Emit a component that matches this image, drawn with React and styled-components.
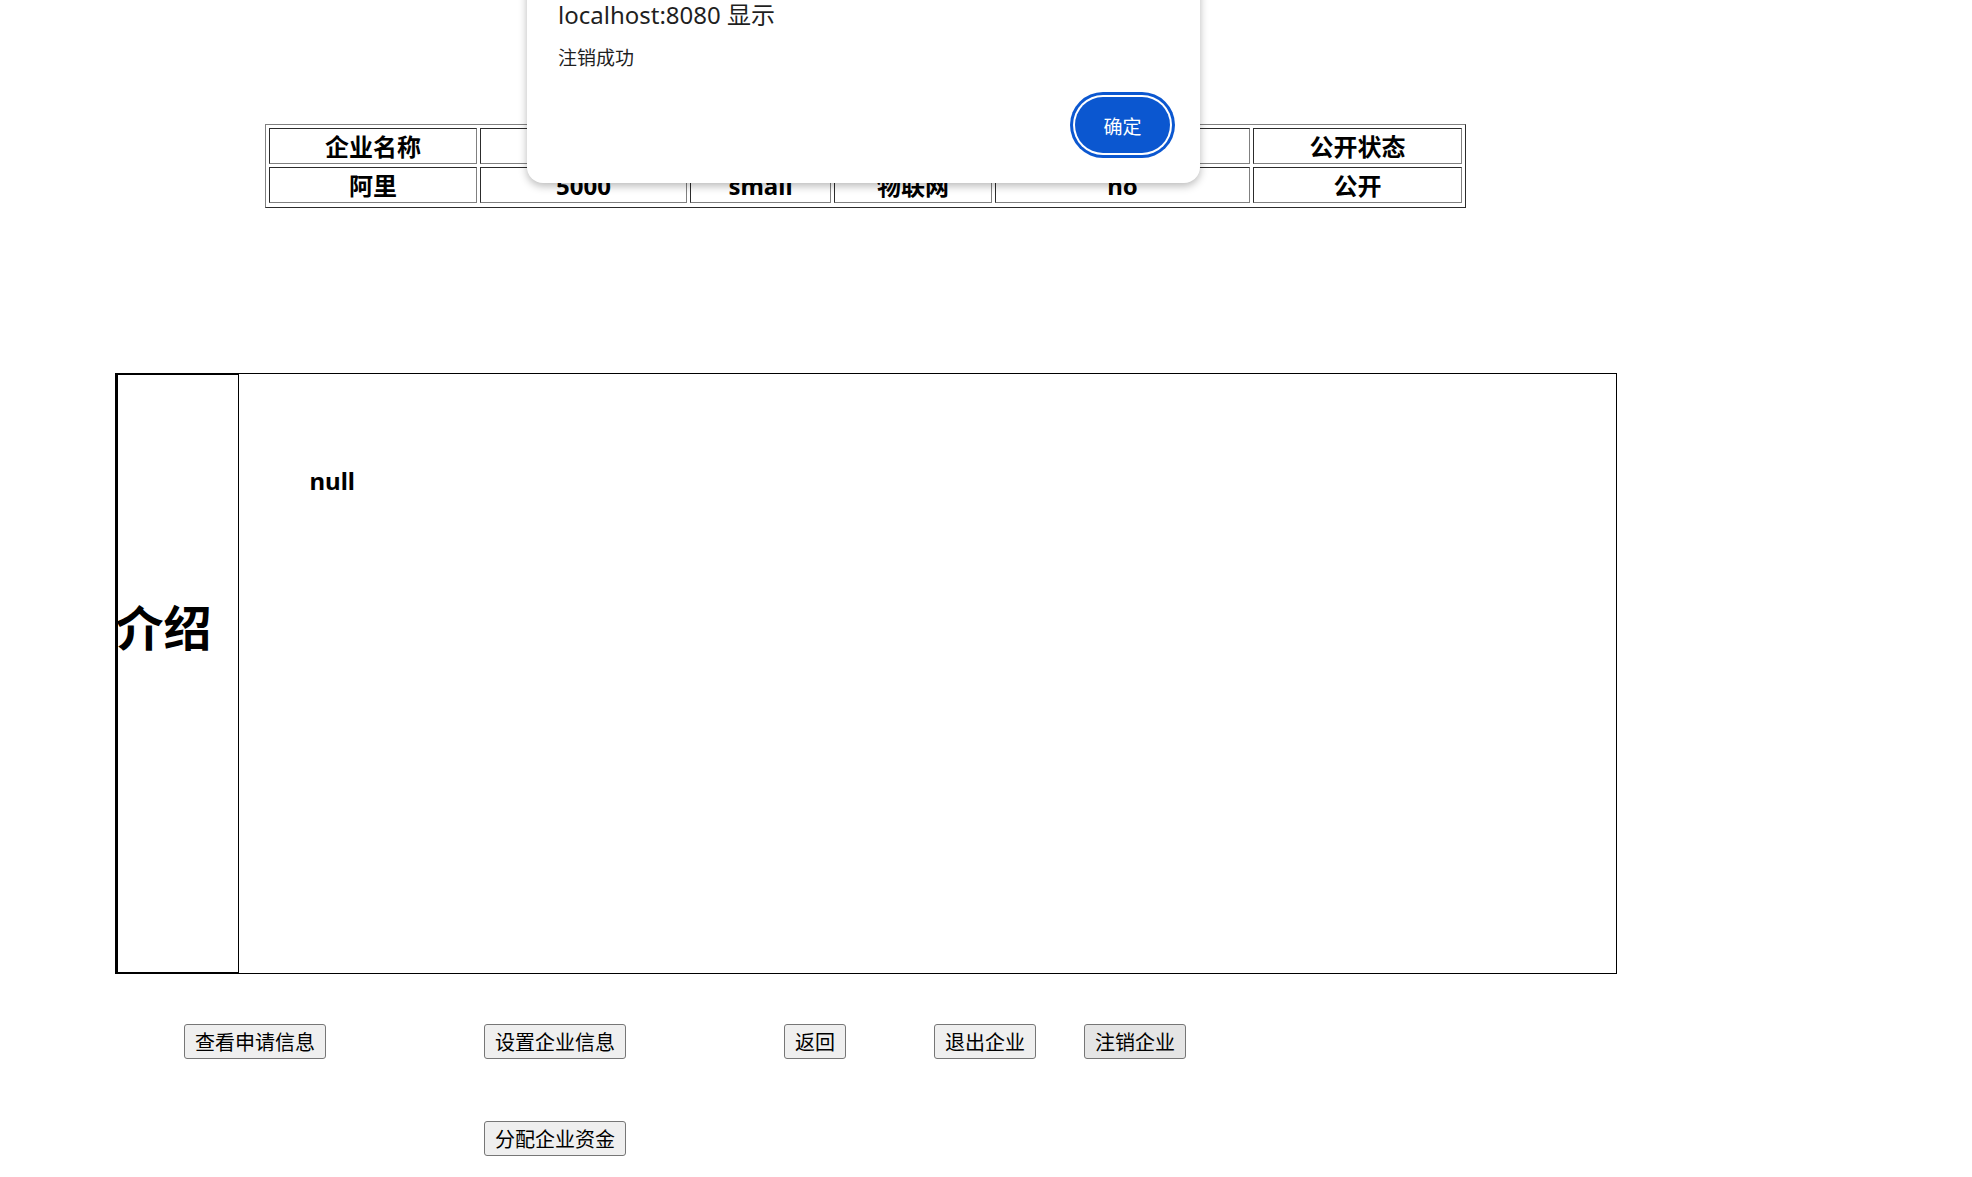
import React from "react";
import styled, { createGlobalStyle } from "styled-components";

const GlobalStyle = createGlobalStyle`
  html, body {
    margin: 0;
    padding: 0;
    background: #fff;
  }
  body {
    font-family: "Noto Sans", "Noto Sans CJK SC", sans-serif;
    color: #000;
  }
`;

const columns = [
  { title: "企业名称", value: "阿里", width: 208 },
  { title: "企业资金", value: "5000", width: 207 },
  { title: "规模", value: "small", width: 141 },
  { title: "行业", value: "物联网", width: 158 },
  { title: "是否需要审核", value: "no", width: 255 },
  { title: "公开状态", value: "公开", width: 209 },
];

const Page = styled.div`
  position: relative;
  width: 1731px;
  padding-top: 124px;
  padding-bottom: 21px;
`;

const InfoTable = styled.table`
  margin: 0 auto;
  border: 1px outset grey;
  border-spacing: 3px;
  padding-bottom: 1px;
`;

const Cell = styled.td`
  box-sizing: border-box;
  width: ${(p) => p.$w}px;
  height: 36px;
  padding: 1px 0 0;
  border: 1px inset grey;
  text-align: center;
  font-size: 24px;
  font-weight: 700;
  line-height: 33px;
`;

const IntroBox = styled.div`
  display: flex;
  width: 1502px;
  height: 601px;
  margin: 165px auto 0;
`;

const IntroLabel = styled.div`
  box-sizing: border-box;
  width: 123px;
  border-top: 2px solid #000;
  border-bottom: 2px solid #000;
  border-left: 3px solid #000;
  padding-top: 226px;
  font-family: "Noto Sans CJK SC", sans-serif;
  font-size: 48px;
  font-weight: 700;
  line-height: 1;
  text-indent: -2px;
`;

const IntroContent = styled.div`
  box-sizing: border-box;
  flex: 1;
  border: 1px solid #000;
  padding: 90px 0 0 71px;
  font-size: 24px;
  font-weight: 700;
`;

const ActionGrid = styled.div`
  display: grid;
  grid-template-columns: repeat(7, 150px);
  row-gap: 62px;
  margin: 50px 0 0 184px;
`;

const ActionButton = styled.button`
  grid-column: ${(p) => p.$col};
  justify-self: start;
  height: 35px;
  padding: 0 10px;
  border: 1px solid #767676;
  border-radius: 3px;
  background: ${(p) => (p.$hover ? "#e5e5e5" : "#efefef")};
  font-family: "Noto Sans CJK SC", sans-serif;
  font-size: 20px;
  color: #000;
  line-height: 1;
`;

const Dialog = styled.div`
  position: absolute;
  left: 527px;
  top: -40px;
  box-sizing: border-box;
  width: 673px;
  height: 223px;
  padding: 39px 20px 0 31px;
  background: #fff;
  border-radius: 16px;
  box-shadow: 0 3px 9px rgba(0, 0, 0, 0.28);
  display: flex;
  flex-direction: column;
`;

const DialogTitle = styled.div`
  font-family: "Noto Sans", "Noto Sans CJK SC", sans-serif;
  font-size: 24px;
  line-height: 32px;
  color: #1f1f1f;
`;

const DialogMessage = styled.div`
  margin-top: 13px;
  font-family: "Noto Sans CJK SC", sans-serif;
  font-size: 19px;
  line-height: 26px;
  color: #1f1f1f;
`;

const DialogFooter = styled.div`
  display: flex;
  justify-content: flex-end;
  margin-top: 27px;
  padding-right: 10px;
`;

const ConfirmButton = styled.button`
  width: 95px;
  height: 56px;
  border: none;
  border-radius: 28px;
  background: #0b57d0;
  box-shadow: 0 0 0 2px #fff, 0 0 0 5px #0b57d0;
  color: #fff;
  font-family: "Noto Sans CJK SC", sans-serif;
  font-size: 19px;
`;

const actions = [
  { label: "查看申请信息", col: 1 },
  { label: "设置企业信息", col: 3 },
  { label: "返回", col: 5 },
  { label: "退出企业", col: 6 },
  { label: "注销企业", col: 7, hover: true },
  { label: "分配企业资金", col: 3 },
];

export default function App() {
  return (
    <Page>
      <GlobalStyle />
      <InfoTable>
        <tbody>
          <tr>
            {columns.map((c) => (
              <Cell key={c.title} $w={c.width}>
                {c.title}
              </Cell>
            ))}
          </tr>
          <tr>
            {columns.map((c) => (
              <Cell key={c.title} $w={c.width}>
                {c.value}
              </Cell>
            ))}
          </tr>
        </tbody>
      </InfoTable>

      <IntroBox>
        <IntroLabel>介绍</IntroLabel>
        <IntroContent>null</IntroContent>
      </IntroBox>

      <ActionGrid>
        {actions.map((a) => (
          <ActionButton key={a.label} $col={a.col} $hover={a.hover}>
            {a.label}
          </ActionButton>
        ))}
      </ActionGrid>

      <Dialog>
        <DialogTitle>localhost:8080 显示</DialogTitle>
        <DialogMessage>注销成功</DialogMessage>
        <DialogFooter>
          <ConfirmButton>确定</ConfirmButton>
        </DialogFooter>
      </Dialog>
    </Page>
  );
}
